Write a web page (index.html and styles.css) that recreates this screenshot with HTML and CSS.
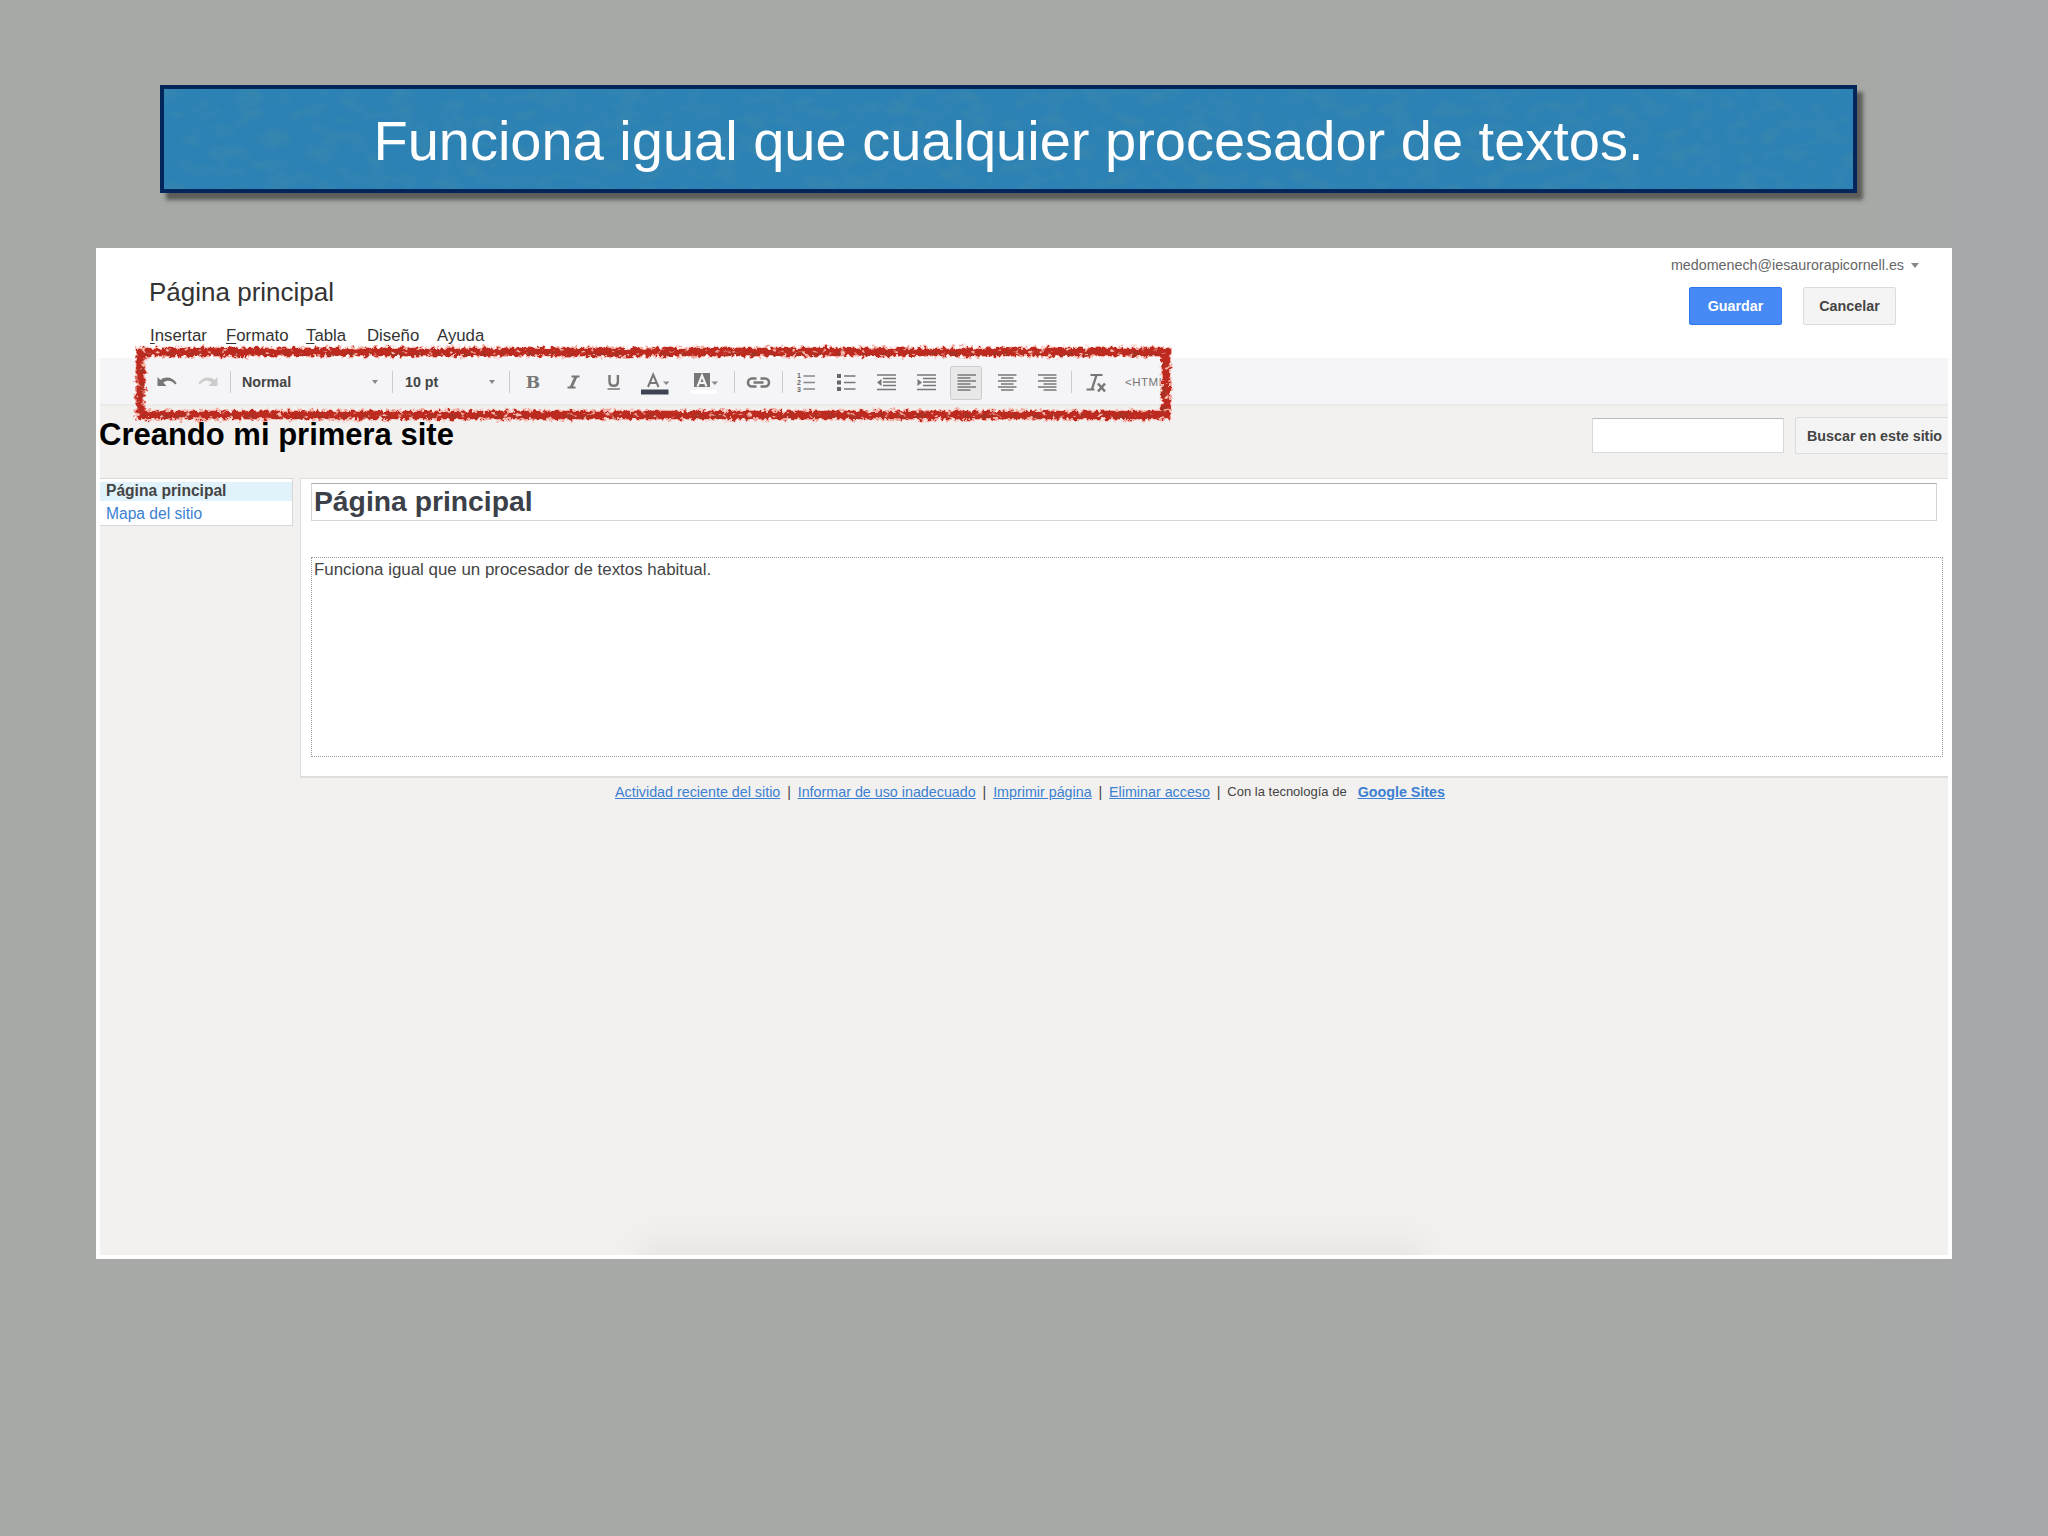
FILE: index.html
```
<!DOCTYPE html>
<html lang="es">
<head>
    <meta charset="UTF-8">
    <title>Página principal</title>
    <link rel="stylesheet" href="styles.css">
</head>
<body>
    <div class="banner">
        <svg class="textura" width="1689" height="100">
            <filter id="papel" x="0" y="0" width="100%" height="100%">
                <feTurbulence type="fractalNoise" baseFrequency="0.04 0.07" numOctaves="5" seed="4"/>
                <feColorMatrix values="0 0 0 0 0.05  0 0 0 0 0.25  0 0 0 0 0.4  2.4 0 0 0 -0.95"/>
            </filter>
            <rect width="1689" height="100" filter="url(#papel)"/>
        </svg>
        <h1>Funciona igual que cualquier procesador de textos.</h1>
    </div>

    <div class="ventana">
        <div class="cabecera">
            <div class="izquierda">
                <h2>Página principal</h2>
                <div class="menu">
                    <span class="m1"><u>I</u>nsertar</span>
                    <span class="m2"><u>F</u>ormato</span>
                    <span class="m3"><u>T</u>abla</span>
                    <span class="m4">Diseño</span>
                    <span>Ayuda</span>
                </div>
            </div>
            <div class="derecha">
                <div class="usuario">medomenech@iesaurorapicornell.es <i class="flecha grande"></i></div>
                <div class="botones">
                    <button class="guardar">Guardar</button>
                    <button class="cancelar">Cancelar</button>
                </div>
            </div>
        </div>

        <div class="barra">
            <svg class="ico deshacer" viewBox="0 0 40 40"><path d="M11 15v9h9l-3.200-3.200c4-3.200 8.500-2.500 11.700 1.600l1.700-1.200c-4-6.200-11.200-7.200-16.200-3.200z" fill="#777"/></svg>
            <svg class="ico deshacer" viewBox="0 0 40 40"><path d="M30 15v9h-9l3.200-3.200c-4-3.200-8.500-2.500-11.700 1.600l-1.700-1.200c4-6.200 11.200-7.200 16.200-3.200z" fill="#ccc"/></svg>
            <i class="sep s1"></i>
            <div class="lista fuente">Normal <i class="flecha"></i></div>
            <i class="sep"></i>
            <div class="lista tam">10 pt <i class="flecha"></i></div>
            <i class="sep s2"></i>
            <svg class="ico" viewBox="0 0 40 40"><text x="20" y="26" class="serifa">B</text></svg>
            <svg class="ico" viewBox="0 0 40 40"><path d="M18.500 14.500h8M14.500 25.500h8" stroke="#777" stroke-width="1.800"/><path d="M23 14.500l-5 11" stroke="#777" stroke-width="3"/></svg>
            <svg class="ico" viewBox="0 0 40 40"><path d="M16.500 13v6.500q0 4.300 4.200 4.300t4.200-4.300V13" fill="none" stroke="#777" stroke-width="2.400"/><path d="M14.500 27h12.500" stroke="#777" stroke-width="1.500"/></svg>
            <svg class="ico" viewBox="0 0 40 40"><path d="M15 25l5.200-12.500L25.500 25M17 21h6.500" fill="none" stroke="#777" stroke-width="2"/><path d="M30 19.500h6.500l-3.250 3.500z" fill="#888"/><path d="M8 27.500h27.500v5H8z" fill="#3d4353"/></svg>
            <svg class="ico resaltar" viewBox="0 0 61 40"><path d="M21 11h16v14H21z" fill="#777"/><path d="M24.500 24.500l4.500-11 4.500 11M26 21h6" fill="none" stroke="#f5f5f5" stroke-width="2"/><path d="M38.500 19.500H45L41.750 23z" fill="#888"/><path d="M18 28h26v4H18z" fill="#fff"/></svg>
            <i class="sep"></i>
            <svg class="ico enlace" viewBox="0 0 47 40"><path d="M21.500 16.500h-4.500a4 4 0 0 0 0 8h4.500M25.500 16.500h4.500a4 4 0 0 1 0 8h-4.500M18.500 20.500h10" fill="none" stroke="#777" stroke-width="2.600"/></svg>
            <i class="sep s2"></i>
            <svg class="ico" viewBox="0 0 40 40"><path d="M17.500 14H29M17.500 20.500H29M17.500 27H29" stroke="#888" stroke-width="1.700"/><text x="13" y="16" class="num">1</text><text x="13" y="23" class="num">2</text><text x="13" y="30" class="num">3</text></svg>
            <svg class="ico" viewBox="0 0 40 40"><path d="M18 14h11.500M18 20.500h11.500M18 27h11.500" stroke="#777" stroke-width="1.700"/><path d="M11 12h4v4h-4zM11 18.500h4v4h-4zM11 25h4v4h-4z" fill="#666"/></svg>
            <svg class="ico" viewBox="0 0 40 40"><path d="M11 13h19M17 16.500h13M17 20h13M17 23.500h13M11 27.500h19" stroke="#777" stroke-width="1.700"/><path d="M15.500 17v7L11 20.500z" fill="#777"/></svg>
            <svg class="ico" viewBox="0 0 40 40"><path d="M11 13h19M17 16.500h13M17 20h13M17 23.500h13M11 27.500h19" stroke="#777" stroke-width="1.700"/><path d="M11.500 17v7l4.500-3.500z" fill="#777"/></svg>
            <svg class="ico" viewBox="0 0 40 40"><rect x="4.500" y="4.500" width="31" height="33" rx="2" fill="#e8e8e8" stroke="#ccc"/><path d="M11.500 13h18.500M11.500 16h13M11.500 19h18.500M11.500 22h13M11.500 25h18.500M11.500 28h13" stroke="#777" stroke-width="1.600"/></svg>
            <svg class="ico" viewBox="0 0 40 40"><path d="M12 13h18.500M15 16h12.500M12 19h18.500M15 22h12.500M12 25h18.500M15 28h12.500" stroke="#777" stroke-width="1.600"/></svg>
            <svg class="ico" viewBox="0 0 40 40"><path d="M12 13h18.500M17.500 16h13M12 19h18.500M17.500 22h13M12 25h18.500M17.500 28h13" stroke="#777" stroke-width="1.600"/></svg>
            <i class="sep s3"></i>
            <svg class="ico" viewBox="0 0 40 40"><path d="M14.500 13h12M10.500 27.500h8" stroke="#777" stroke-width="1.800"/><path d="M20.500 13L16 27" stroke="#777" stroke-width="2.400"/><path d="M22 21.500l7 8M29 21.500l-7 8" stroke="#777" stroke-width="2.500"/></svg>
            <span class="html">&lt;HTML</span>
        </div>

        <div class="sitio">
            <div class="titulo">Creando mi primera site</div>
            <input class="buscar" type="text">
            <button class="buscarBtn">Buscar en este sitio</button>
        </div>

        <div class="cuerpo">
            <div class="lateral">
                <div class="activa">Página principal</div>
                <div class="enlaceMapa">Mapa del sitio</div>
            </div>
            <div class="contenido">
                <div class="tituloPagina">Página principal</div>
                <div class="editor">Funciona igual que un procesador de textos habitual.</div>
            </div>
        </div>

        <div class="pie">
            <a>Actividad reciente del sitio</a><b>|</b><a>Informar de uso inadecuado</a><b>|</b><a>Imprimir página</a><b>|</b><a>Eliminar acceso</a><b>|</b><span>Con la tecnología de</span><a class="google">Google Sites</a>
        </div>

        <div class="sombra"></div>
    </div>

    <!-- marco rojo alrededor de la barra de herramientas -->
    <svg class="marco" width="1050" height="90" viewBox="0 0 1050 90">
        <filter id="tiza" x="0" y="0" width="1050" height="90" filterUnits="userSpaceOnUse" color-interpolation-filters="sRGB">
            <feTurbulence type="fractalNoise" baseFrequency="0.22" numOctaves="3" seed="7" result="ruido"/>
            <feDisplacementMap in="SourceGraphic" in2="ruido" scale="8" xChannelSelector="R" yChannelSelector="G" result="linea"/>
            <feTurbulence type="fractalNoise" baseFrequency="0.16 0.24" numOctaves="2" seed="21"/>
            <feColorMatrix values="0 0 0 0 0.97  0 0 0 0 0.72  0 0 0 0 0.67  7 0 0 0 -4.3" result="motas"/>
            <feComposite in="motas" in2="linea" operator="atop"/>
        </filter>
        <g fill="none" filter="url(#tiza)">
            <path d="M12.500 14H1038V77H12.500z" stroke="#f3a9a0" stroke-width="10.500"/>
            <path d="M12.500 14H1038V77H12.500z" stroke="#bd2a20" stroke-width="8"/>
            <path d="M16 16H1036V78H14V20" stroke="#a33325" stroke-width="2" stroke-dasharray="9 14 4 19 13 8"/>
        </g>
    </svg>
</body>
</html>
```
FILE: styles.css
```
*{
    box-sizing: border-box;
}
body{
    margin: 0;
    width: 2048px;
    height: 1536px;
    padding: 85px 96px 0;
    position: relative;
    overflow: hidden;
    font-family: "Liberation Sans", Arial, sans-serif;
    background: linear-gradient(to right, #a6a9a5 0, #a7a9a6 90%, #a6a8aa 97%);
}
.banner{
    width: 1697px;
    height: 108px;
    margin-left: 64px;
    border: 4px solid #03265a;
    background: #2c82b5;
    box-shadow: 6px 7px 4px rgba(60,60,55,0.7);
    position: relative;
}
.textura{
    position: absolute;
    left: 0;
    top: 0;
    opacity: 0.5;
}
.banner h1{
    position: relative;
    margin: 0;
    font-size: 56px;
    font-weight: normal;
    line-height: 103px;
    text-align: center;
    color: #fff;
}
.ventana{
    width: 1856px;
    height: 1011px;
    margin-top: 55px;
    border: 4px solid #fff;
    border-top: 0;
    background: #f2f1ef;
    overflow: hidden;
    position: relative;
}
.cabecera{
    height: 110px;
    background: #fff;
    display: flex;
    justify-content: space-between;
}
.izquierda{
    padding: 29px 0 0 49px;
}
.cabecera h2{
    margin: 0;
    font-size: 26px;
    line-height: 30px;
    font-weight: normal;
    color: #333;
}
.menu{
    display: flex;
    margin: 19px 0 0 1px;
    font-size: 16.8px;
    line-height: 20px;
    color: #333;
}
.menu u{
    text-underline-offset: 2px;
}
.m1{ width: 76px; }
.m2{ width: 80px; }
.m3{ width: 61px; }
.m4{ width: 70px; }
.derecha{
    padding: 8px 29px 0 0;
    color: #666;
}
.usuario{
    display: flex;
    justify-content: flex-end;
    align-items: center;
    font-size: 14.3px;
    line-height: 18px;
}
.flecha{
    border: 3.5px solid transparent;
    border-top: 4px solid #888;
    border-bottom: 0;
}
.grande{
    border-width: 5px 4.5px 0;
    margin-left: 7px;
}
.botones{
    display: flex;
    justify-content: flex-end;
    gap: 21px;
    margin: 13px 23px 0 0;
}
button{
    font: bold 14.3px "Liberation Sans", Arial, sans-serif;
    padding: 0;
    border: 1px solid #dcdcdc;
    border-radius: 2px;
    background: #f4f4f4;
    color: #444;
}
.botones button{
    width: 93px;
    height: 38px;
}
.botones .guardar{
    background: #478af5;
    border-color: #3079ed;
    color: #fff;
}
.barra{
    height: 48px;
    background: #f5f5f7;
    border-bottom: 2px solid #ebebeb;
    display: flex;
    align-items: center;
    padding: 2px 0 0 46px;
}
.ico{
    width: 40px;
    height: 40px;
    flex: none;
}
.deshacer{ width: 41px; }
.resaltar{ width: 61px; }
.enlace{ width: 47px; }
.sep{
    width: 1px;
    height: 22px;
    background: #ccc;
}
.s1{ margin-left: 2px; }
.s2{ margin-right: 3px; }
.s3{ margin: 0 4px 0 5px; }
.lista{
    display: flex;
    justify-content: space-between;
    align-items: center;
    padding-top: 1px;
    font-size: 14.3px;
    font-weight: bold;
    color: #444;
}
.fuente{
    width: 161px;
    padding: 0 14px 0 11px;
}
.tam{
    width: 116px;
    padding: 0 14px 0 12px;
}
.serifa{
    font: bold 17px "DejaVu Serif", serif;
    text-anchor: middle;
    fill: #777;
}
.num{
    font: bold 7px "Liberation Sans", sans-serif;
    text-anchor: middle;
    fill: #666;
}
.html{
    margin-left: 9px;
    font-size: 11.5px;
    letter-spacing: 0.5px;
    color: #777;
}
.sitio{
    height: 72px;
    display: flex;
    align-items: flex-start;
    padding-top: 11px;
}
.titulo{
    width: 1492px;
    flex: none;
    text-indent: -1px;
    font-size: 31px;
    font-weight: bold;
    line-height: 36px;
    color: #000;
}
.buscar{
    width: 192px;
    height: 35px;
    flex: none;
    margin: 1px 11px 0 0;
    border: 1px solid #d9d9d9;
    border-top-color: #bbb;
    background: #fff;
}
.buscarBtn{
    width: 160px;
    height: 37px;
    flex: none;
    padding-left: 11px;
    text-align: left;
}
.cuerpo{
    display: flex;
    height: 300px;
}
.lateral{
    width: 193px;
    height: 48px;
    margin-right: 7px;
    padding-top: 3px;
    border: 1px solid #d8d8d8;
    border-left: 0;
    background: #fff;
    font-size: 15.6px;
}
.activa{
    height: 19px;
    line-height: 18px;
    padding-left: 6px;
    background: #e1f3fa;
    font-weight: bold;
    color: #444;
}
.enlaceMapa{
    padding-left: 6px;
    line-height: 26px;
    color: #3b80d2;
}
.contenido{
    flex: 1;
    padding: 4px 5px 0 10px;
    border: 1px solid #ddd;
    border-right: 0;
    border-bottom: 2px solid #dedede;
    background: #fff;
}
.tituloPagina{
    width: 1626px;
    height: 38px;
    padding-left: 2px;
    border: 1px solid #d5d5d5;
    border-top-color: #aaa;
    font-size: 28.3px;
    font-weight: bold;
    line-height: 35px;
    color: #3b4049;
}
.editor{
    height: 200px;
    margin-top: 36px;
    padding: 2px;
    border: 1px dotted #999;
    font-size: 16.9px;
    line-height: 20px;
    color: #444;
}
.pie{
    display: flex;
    padding: 4px 0 0 515px;
    font-size: 14.3px;
    line-height: 20px;
    color: #444;
    white-space: nowrap;
}
.pie a{
    color: #3b80d2;
    text-decoration: underline;
}
.pie b{
    width: 17.4px;
    text-align: center;
    font-weight: normal;
}
.pie span{
    font-size: 13px;
}
.pie .google{
    font-weight: bold;
    margin-left: 11px;
}
/* sombra que asoma por debajo */
.sombra{
    position: absolute;
    left: 545px;
    bottom: -32px;
    width: 770px;
    height: 38px;
    background: rgba(0,0,0,0.04);
    filter: blur(10px);
    box-shadow: 0 0 30px 8px rgba(0,0,0,0.05);
}
.marco{
    position: absolute;
    left: 128px;
    top: 338px;
}
```
